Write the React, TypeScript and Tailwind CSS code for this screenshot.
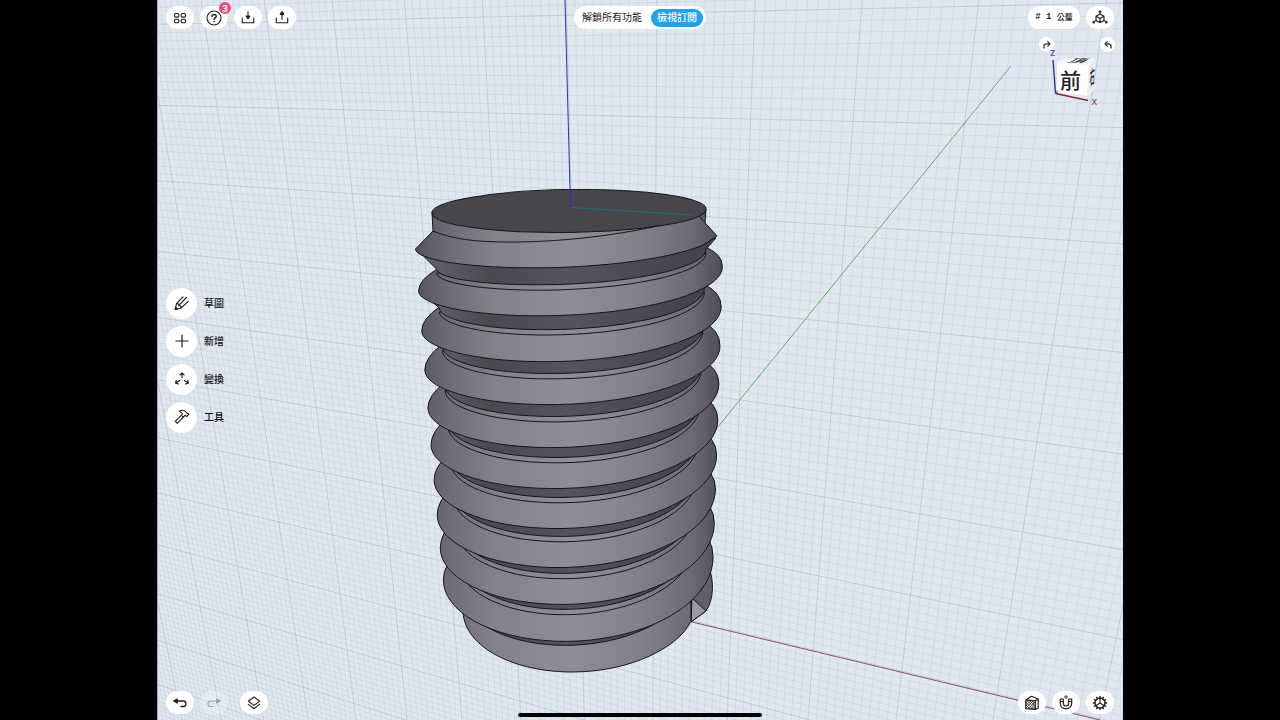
import type { ReactNode } from "react";

type Point = [number, number];

const fmt = ([x, y]: Point) => `${x.toFixed(1)} ${y.toFixed(1)}`;

/* ---------- ground grid, in one-point-per-axis perspective ---------- */

function project(i: number, j: number): Point {
  const s = -0.03198 * i;
  const t = 0.0285 * j;
  const w = 1 + s + t;
  return [(217 - 1633 * s + 640 * t) / w, (106.7 + 64 * s + 2950 * t) / w];
}

function gridPath(keep: (n: number) => boolean) {
  let d = "";
  for (let n = -40; n <= 120; n++) {
    if (keep(n)) d += `M${fmt(project(n / 10, -2))}L${fmt(project(n / 10, 11))}`;
  }
  for (let n = -20; n <= 110; n++) {
    if (keep(n)) d += `M${fmt(project(-4, n / 10))}L${fmt(project(12, n / 10))}`;
  }
  return d;
}

const minorGrid = gridPath((n) => n % 10 !== 0);
const majorGrid = gridPath((n) => n % 10 === 0);

/* ---------- screw thread ---------- */

type Arc = { l: Point; r: Point; depth: number };

/* Front half of one helix turn, from its left end to its right end. */
function arcPoints({ l, r, depth }: Arc): Point[] {
  const points: Point[] = [];
  const steps = 36;
  for (let n = 0; n <= steps; n++) {
    const u = n / steps;
    const a = Math.PI * u;
    points.push([
      (l[0] + r[0]) / 2 - ((r[0] - l[0]) / 2) * Math.cos(a),
      l[1] + (r[1] - l[1]) * u + depth * Math.sin(a),
    ]);
  }
  return points;
}

const line = (points: Point[]) => points.map(fmt).join("L");

const leftY = [249, 291, 331, 370, 408, 445, 480, 515, 548, 580];
const rightY = [227, 267, 307, 346, 384, 420, 455, 489, 523, 557];
const crestBottom = [267, 315, 361, 404, 447, 488, 528, 567, 604, 641];
const rootBottom = [284, 329, 373, 416, 457, 497, 536, 573, 609, 645];

const crests: Arc[] = leftY.map((y, k) => ({
  l: [415.5 + 3.1 * k, y],
  r: [723.5 - 1.15 * k, rightY[k]],
  depth: crestBottom[k] - (y + rightY[k]) / 2,
}));

const roots: Arc[] = rootBottom.map((y, k) => {
  const depth = crests[k].depth * 0.86;
  const mid = y - depth;
  return { l: [436.5 + 2.9 * k, mid + 10], r: [706 - 1.6 * k, mid - 10], depth };
});

const lowerRoots: Arc[] = roots.map(({ l, r, depth }) => ({
  l: [l[0], l[1] + 4],
  r: [r[0], r[1] + 4],
  depth: depth + 1.4,
}));

function Turn({ k }: { k: number }) {
  const crest = crests[k];
  const root = roots[k];
  const crestPts = arcPoints(crest);
  const rootPts = arcPoints(root);
  const strip = arcPoints(lowerRoots[k]);
  const top = k > 0 ? lowerRoots[k - 1] : null;
  let band = "";
  if (top) {
    const startL = top.l[1] - 2 - 1.5 * k;
    const startR = top.r[1] - 4 - 1.7 * k;
    band =
      `M${fmt([top.l[0], startL])}Q${fmt([crest.l[0], crest.l[1] - (crest.l[1] - startL) * 0.5])} ${line(crestPts)}` +
      `Q${fmt([crest.r[0], crest.r[1] - (crest.r[1] - startR) * 0.65])} ${fmt([top.r[0], startR])}Z`;
  } else {
    const cut = crestPts.filter(([x]) => x < 708);
    band = `M433 231L${line(cut)}L717 236L698 215L600 200Z`;
  }
  return (
    <g strokeLinejoin="round">
      {k < 9 && <path d={`M${line(strip)}Z`} fill="url(#light)" stroke="#15151a" />}
      <path
        d={`M${fmt([crest.l[0] + 3, crest.l[1] + 2])}L${line(rootPts)}L${
          k === 0 ? "716 238" : fmt([crest.r[0] - 3, crest.r[1] + 2])
        }Z`}
        fill="url(#dark)"
        stroke="#15151a"
      />
      <path d={band} fill="url(#light)" stroke="#15151a" />
    </g>
  );
}

function Scene() {
  return (
    <svg
      className="absolute inset-0 h-full w-full"
      viewBox="157 0 966 720"
      preserveAspectRatio="xMidYMid slice"
      aria-hidden="true"
    >
      <defs>
        <linearGradient id="light" gradientUnits="userSpaceOnUse" x1="415" y1="0" x2="723" y2="0">
          <stop offset="0" stopColor="#54535b" />
          <stop offset="0.1" stopColor="#6c6b73" />
          <stop offset="0.25" stopColor="#82818a" />
          <stop offset="0.5" stopColor="#8f8e97" />
          <stop offset="0.72" stopColor="#838189" />
          <stop offset="0.9" stopColor="#6c6a72" />
          <stop offset="1" stopColor="#4d4b53" />
        </linearGradient>
        <linearGradient id="dark" gradientUnits="userSpaceOnUse" x1="415" y1="0" x2="723" y2="0">
          <stop offset="0" stopColor="#67656e" />
          <stop offset="0.25" stopColor="#4a4950" />
          <stop offset="0.5" stopColor="#55535c" />
          <stop offset="1" stopColor="#403e46" />
        </linearGradient>
      </defs>
      <path d={minorGrid} fill="none" stroke="#8499b0" strokeOpacity="0.2" strokeWidth="0.7" />
      <path d={majorGrid} fill="none" stroke="#8091a3" strokeOpacity="0.32" strokeWidth="1" />
      <path d="M157.500 0V720" stroke="#a9adb2" strokeWidth="1" />
      <path d="M1011 66L700 449" stroke="#5fae68" strokeWidth="1" />
      <path d="M688 621L1100 720" stroke="#914f67" strokeWidth="1" />

      <g stroke="#15151a" strokeWidth="1" strokeLinejoin="round">
        <path d="M691 598L704 562L709 568C714 580 714 600 706 611L691 622Z" fill="#625f69" />
        <path d="M692 598L706 611L691 622Z" fill="#9b99a3" />
        <path
          d="M463 590L463 612C465 648 515 672 572 672C632 672 680 646 691 621L691 590Z"
          fill="url(#light)"
        />
        {[9, 8, 7, 6, 5, 4, 3, 2, 1].map((k) => (
          <Turn key={k} k={k} />
        ))}
        <path d="M698 214L706 209L705 224Z" fill="#5c5a62" />
        <Turn k={0} />
        <path
          d="M432 212L433 231C455 240 480 242.500 520 242C580 241 650 231 698 215L705 210Z"
          fill="url(#light)"
        />
        <ellipse cx="569" cy="211" rx="137" ry="21.400" transform="rotate(-0.8 569 211)" fill="#47464c" />
      </g>
      <path
        d="M703 251L697 259M702 292L696 299M700 334L695 340M698 373L694 379"
        stroke="#1f6765"
        strokeWidth="0.800"
      />
      <path d="M570.500 207.500L694 215" stroke="#17757a" strokeWidth="1.200" />
      <path d="M565 0L570.500 208" stroke="#35359a" strokeWidth="1" />
    </svg>
  );
}

/* ---------- controls ---------- */

function Icon({ children, className = "size-4" }: { children: ReactNode; className?: string }) {
  return (
    <svg
      viewBox="0 0 16 16"
      className={className}
      fill="none"
      stroke="currentColor"
      strokeWidth="1.1"
      strokeLinecap="round"
      strokeLinejoin="round"
      aria-hidden="true"
    >
      {children}
    </svg>
  );
}

function PillButton({
  label,
  faded = false,
  className = "",
  children,
}: {
  label: string;
  faded?: boolean;
  className?: string;
  children: ReactNode;
}) {
  return (
    <button
      type="button"
      aria-label={label}
      disabled={faded}
      className={`relative flex h-[23px] w-7 items-center justify-center rounded-full ${
        faded ? "bg-white/30 text-[#9aa1aa]" : "bg-white text-[#1d1d20]"
      } ${className}`}
    >
      {children}
    </button>
  );
}

function Tool({ label, children }: { label: string; children: ReactNode }) {
  return (
    <button type="button" className="flex items-center gap-[7px] text-[10px] font-medium text-[#111]">
      <span className="flex size-[31px] items-center justify-center rounded-full bg-white text-[#1d1d20]">
        {children}
      </span>
      {label}
    </button>
  );
}

function ViewCube() {
  return (
    <div className="relative h-20 w-[84px]">
      <svg className="absolute inset-0 h-full w-full" viewBox="1036 33 84 80" aria-hidden="true">
        <path d="M1057 62Q1060 60 1067 58Q1082 57 1094 58.500Q1095 60 1095 63L1094 88Q1093 92 1087 96L1057 93Z" fill="#f4f5f8" />
        <path d="M1057 64Q1072 63 1089 66L1087 95Q1070 94 1057 92Z" fill="#ffffff" />
        <path d="M1089 66L1095 60L1094 88L1087 95Z" fill="#e9ebf0" />
        <path d="M1055.500 93.500L1053 60" stroke="#2a2a86" strokeWidth="1.300" />
        <path d="M1055.500 93.500L1088 100.500" stroke="#8a1f33" strokeWidth="1.300" />
        <path d="M1055.500 93.500L1058 91" stroke="#2c8a3c" strokeWidth="1.300" />
        <g fill="#1f1f23" fontWeight="500" textAnchor="middle">
          <text x="1070.500" y="87.500" fontSize="21">
            前
          </text>
          <text fontSize="20" transform="matrix(0.85 0.03 -0.5 0.26 1075 62.500)">
            頂
          </text>
          <text fontSize="20" transform="matrix(0.26 -0.2 -0.02 1 1092 84)">
            右
          </text>
        </g>
        <text x="1052.500" y="56" fontSize="8" fontWeight="600" textAnchor="middle" fill="#55559c">
          Z
        </text>
        <text x="1094.500" y="105" fontSize="8" fontWeight="600" textAnchor="middle" fill="#a0527c">
          X
        </text>
      </svg>
      <div className="flex justify-between pt-1 pr-[5px] pl-[3px]">
        <button
          type="button"
          aria-label="向右旋轉"
          className="flex size-[15px] items-center justify-center rounded-full bg-white text-[#333]"
        >
          <Icon className="size-3">
            <path d="M4 12V9.500Q4 6.500 7 6.500H11.500M9 3.500L12 6.500L9 9.500" strokeWidth="1.700" />
          </Icon>
        </button>
        <button
          type="button"
          aria-label="向左旋轉"
          className="flex size-[15px] items-center justify-center rounded-full bg-white text-[#333]"
        >
          <Icon className="size-3">
            <path d="M12 12V9.500Q12 6.500 9 6.500H4.500M7 3.500L4 6.500L7 9.500" strokeWidth="1.700" />
          </Icon>
        </button>
      </div>
    </div>
  );
}

const gearTeeth = Array.from({ length: 12 }, (_, n) => {
  const a = (n * Math.PI) / 6;
  const at = (r: number): Point => [8 + r * Math.cos(a), 8 + r * Math.sin(a)];
  return `M${fmt(at(5))}L${fmt(at(6.6))}`;
}).join("");

export default function App() {
  return (
    <div className="flex min-h-screen justify-center bg-black font-['Inter','Noto_Sans_CJK_TC',sans-serif]">
      <main className="relative flex aspect-[966/720] h-screen flex-col overflow-hidden bg-[#dfe7f0]">
        <Scene />

        <header className="relative grid grid-cols-[1fr_auto_1fr] px-[9px] pt-[6px]">
          <div className="flex gap-[6px]">
            <PillButton label="設計">
              <Icon>
                <rect x="2.500" y="3.500" width="4.300" height="3.600" rx="1" />
                <rect x="9.200" y="3.500" width="4.300" height="3.600" rx="1" />
                <rect x="2.500" y="9.200" width="4.300" height="3.600" rx="1" />
                <rect x="9.200" y="9.200" width="4.300" height="3.600" rx="1" />
              </Icon>
            </PillButton>
            <PillButton label="說明">
              <Icon>
                <circle cx="8" cy="8" r="7" />
                <path d="M5.900 6.500C5.900 3.700 10.200 3.900 10.200 6.400C10.200 7.900 8 8 8 9.500M8 11.400V11.500" strokeWidth="1.500" />
              </Icon>
              <span className="absolute -top-1 -right-[3px] flex size-3 items-center justify-center rounded-full bg-[#ea4b7b] text-[9px] leading-none font-bold text-white">
                3
              </span>
            </PillButton>
            <PillButton label="匯入">
              <Icon>
                <path d="M2.300 8V12.800H13.700V8M8 1.800V8" />
                <path d="M6.400 6.200H9.600L8 8.600Z" fill="currentColor" strokeWidth="1.400" />
              </Icon>
            </PillButton>
            <PillButton label="匯出">
              <Icon>
                <path d="M2.300 8V12.800H13.700V8M8 9.300V3" />
                <path d="M6.400 4.200H9.600L8 1.800Z" fill="currentColor" strokeWidth="1.400" />
              </Icon>
            </PillButton>
          </div>

          <div className="flex h-[23px] items-center gap-[9px] rounded-full bg-white pr-[3px] pl-2 text-[10px] text-[#1a1a1c]">
            <span>解鎖所有功能</span>
            <button
              type="button"
              className="flex h-[18px] items-center rounded-full bg-[#1ea3ea] px-[6px] font-medium text-white"
            >
              檢視訂閱
            </button>
          </div>

          <div className="flex justify-end gap-[6px]">
            <button
              type="button"
              className="flex h-[23px] w-[52px] items-center justify-center rounded-full bg-white font-['Liberation_Mono','Noto_Sans_CJK_TC',monospace] text-[9px] font-bold whitespace-pre text-[#222]"
            >
              {"# 1 "}
              <span className="text-[8px] font-medium">公釐</span>
            </button>
            <PillButton label="視圖">
              <Icon>
                <path d="M8 4L12 6.200V10.400L8 12.600L4 10.400V6.200ZM4 6.200L8 8.400L12 6.200M8 8.400V12.600" />
                <path d="M8 4V0.800M4 10.400L1 12.600M12 10.400L15 12.600M7 1.900L8 0.800L9 1.900M1.200 11.200L1 12.600L2.500 12.900M14.800 11.200L15 12.600L13.500 12.900" />
              </Icon>
            </PillButton>
          </div>
        </header>

        <div className="relative flex flex-1 items-start justify-between pr-[3px] pl-[9px]">
          <nav aria-label="工具列" className="flex flex-col gap-[7px] self-center">
            <Tool label="草圖">
              <Icon>
                <path d="M1.200 14.500L2.500 8.600L9 1.800M1.200 14.500L7 13L14.300 6.300M2.500 8.600C3.700 8.200 4.800 8.800 4.700 10.400C6.200 10.200 7.300 11.500 7 13M4.700 10.400L12.500 2.500" />
                <path d="M1.200 14.500L1.700 12.300L3.400 13.900Z" fill="currentColor" />
              </Icon>
            </Tool>
            <Tool label="新增">
              <Icon>
                <path d="M8 2V14M2 8H14" strokeWidth="1.200" />
              </Icon>
            </Tool>
            <Tool label="變換">
              <Icon>
                <path d="M8 6.300V1.800M5.900 3.900L8 1.800L10.100 3.900" strokeWidth="1.200" />
                <path d="M5.600 9.600L1.600 12.200M2.300 9.300L1.600 12.200L4.500 13" strokeWidth="1.200" />
                <path d="M10.400 9.600L14.400 12.200M13.700 9.300L14.400 12.200L11.500 13" strokeWidth="1.200" />
              </Icon>
            </Tool>
            <Tool label="工具">
              <Icon>
                <path d="M7.300 6.300L1.300 12.300L3.300 14.300L9.300 8.200" />
                <path d="M5.300 2.300C7.500 0.900 10.200 1.200 11.800 2.800L12.600 4L14.800 5.100L12.900 7.500L11 6.300L9.300 8.200L7.300 6.300L8.500 5C7.800 3.800 6.800 3 5.300 2.300Z" />
              </Icon>
            </Tool>
          </nav>
          <div className="pt-1">
            <ViewCube />
          </div>
        </div>

        <footer className="relative flex justify-between px-[9px] pb-[6px]">
          <div className="flex gap-[6px]">
            <PillButton label="復原">
              <Icon>
                <path d="M4 6H11.500Q14 6.300 14 8.700Q14 11.300 11.500 11.500H9" strokeWidth="1.300" />
                <path d="M5.300 3.900V8.100L1.700 6Z" fill="currentColor" />
              </Icon>
            </PillButton>
            <PillButton label="重做" faded>
              <Icon>
                <path d="M12 6H4.500Q2 6.300 2 8.700Q2 11.300 4.500 11.500H7" />
                <path d="M10.700 3.900V8.100L14.300 6Z" fill="currentColor" />
              </Icon>
            </PillButton>
            <PillButton label="圖層" className="ml-[6px]">
              <Icon>
                <path d="M8 2L13.600 6.200L8 10.400L2.400 6.200Z" />
                <path d="M2.400 9.400L8 13.800L13.600 9.400" />
              </Icon>
            </PillButton>
          </div>
          <div className="flex gap-[6px]">
            <PillButton label="剖面">
              <Icon>
                <path d="M1.800 4.800L7.500 1.300L14.200 4V13.200L11.300 14.400L1.800 13.600ZM1.800 4.800L11.300 5.800L14.200 4M11.300 5.800V14.400" strokeWidth="1.200" />
                <path d="M2 8L4.500 5.500M2 10.500L6.500 5.800M2.200 13L8.800 6M4.500 13.500L11 7M7 13.700L11 9.500M9.500 14L11 12.300M3 5.500L11 13.500M5.500 5.500L11 11M8 5.800L11 8.500M2 7.500L8.500 13.800M2 10L5.500 13.500" strokeWidth="0.700" />
              </Icon>
            </PillButton>
            <PillButton label="吸附">
              <Icon>
                <path d="M2.300 4V8.300C2.300 11.600 4.800 13.800 8 13.800C11.200 13.800 13.700 11.600 13.700 8.300V4H10.700V8.300C10.700 9.900 9.600 11 8 11C6.400 11 5.300 9.900 5.300 8.300V4ZM2.300 6.500H5.300M10.700 6.500H13.700" strokeWidth="1.200" />
                <path d="M8 0.500V3.500M6.500 2H9.500" strokeWidth="0.900" />
              </Icon>
            </PillButton>
            <PillButton label="設定">
              <Icon>
                <circle cx="8" cy="8" r="5" strokeWidth="1.300" />
                <path d={gearTeeth} strokeWidth="1.400" />
                <path d="M8 8V3.500M8 8L4.200 10.500M8 8L11.800 10.500" />
              </Icon>
            </PillButton>
          </div>
        </footer>

        <div className="absolute bottom-[3px] left-1/2 h-1 w-[244px] -translate-x-1/2 rounded-full bg-black" />
      </main>
    </div>
  );
}
